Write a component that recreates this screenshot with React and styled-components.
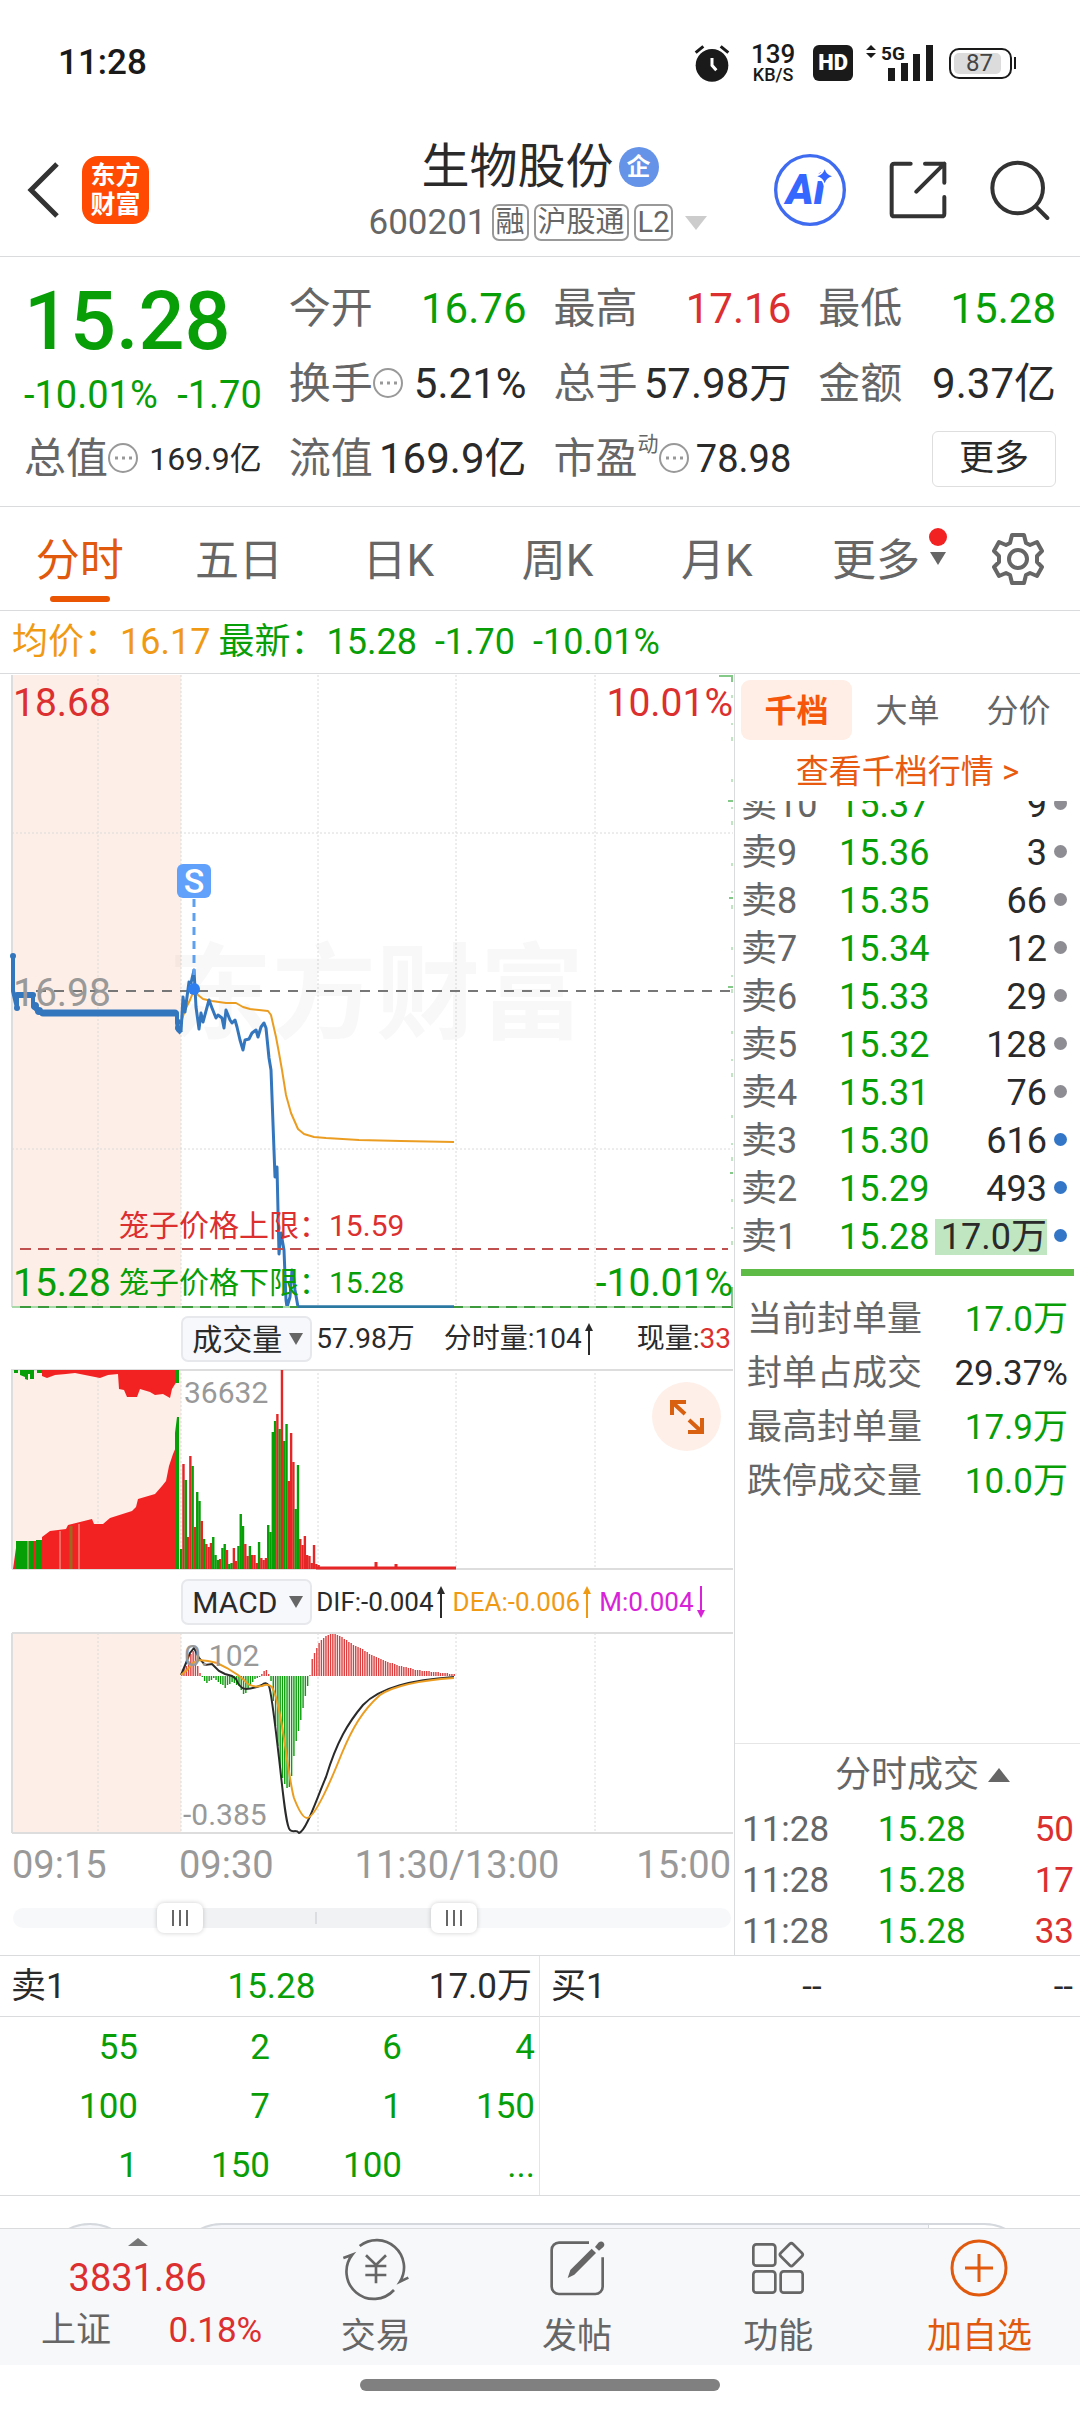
import { useState } from "react";
import styled, { createGlobalStyle } from "styled-components";

const GREEN = "#089e08";
const RED = "#dc2f2f";
const ORANGE = "#e0590d";
const LINE = "#d9dbdd";

const GlobalStyle = createGlobalStyle`
  * { box-sizing: border-box; }
  body {
    margin: 0;
    background: #fff;
    color: #2a2a2a;
    font-family: Roboto, "Noto Sans CJK SC", sans-serif;
  }
  button, input, select {
    font: inherit;
    color: inherit;
    background: none;
    border: 0;
    padding: 0;
    margin: 0;
  }
  a { text-decoration: none; }
  table { border-collapse: collapse; }
  th { font-weight: 400; text-align: left; }
  td, th { padding: 0; }
  svg { display: block; flex-shrink: 0; }
`;

const tones = { up: RED, down: GREEN, plain: "#2a2a2a", muted: "#666" };

/* ---------- status bar ---------- */

const StatusBar = styled.div`
  display: flex;
  align-items: center;
  justify-content: space-between;
  padding: 43px 64px 37px 58px;
`;

const Clock = styled.div`
  font-size: 35px;
  line-height: 40px;
  font-weight: 500;
  color: #1a1a1a;
`;

const StatusIcons = styled.div`
  display: flex;
  align-items: center;
  color: #1a1a1a;
`;

const NetSpeed = styled.div`
  display: flex;
  flex-direction: column;
  align-items: center;
  margin: 0 18px 0 21px;
  font-size: 26px;
  line-height: 23px;
  font-weight: 500;

  small {
    font-size: 18px;
    line-height: 17px;
  }
`;

const HdBadge = styled.div`
  padding: 0 5px;
  border-radius: 6px;
  background: #1a1a1a;
  color: #fff;
  font-size: 22px;
  line-height: 36px;
  font-weight: 900;
`;

const Signal = styled.svg`
  margin: 0 15px 0 13px;
`;

const Battery = styled.div`
  display: flex;
  align-items: center;

  div {
    width: 63px;
    padding: 3px;
    border: 2px solid #1a1a1a;
    border-radius: 10px;
  }
  span {
    display: block;
    width: 47px;
    border-radius: 5px;
    background: #dcdcdc;
    color: #444;
    font-size: 24px;
    line-height: 21px;
    padding-left: 12px;
  }
  &::after {
    content: "";
    width: 2px;
    height: 12px;
    margin-left: 2px;
    background: #1a1a1a;
  }
`;

/* ---------- header ---------- */

const Header = styled.header`
  display: grid;
  grid-template-columns: 1fr auto 1fr;
  align-items: center;
  padding: 18px 30px 15px 26px;
  border-bottom: 1px solid ${LINE};
`;

const HeaderLeft = styled.div`
  display: flex;
  align-items: center;
  gap: 22px;
`;

const HeaderRight = styled.div`
  display: flex;
  align-items: center;
  justify-content: flex-end;
  gap: 43px;
`;

const Logo = styled.div`
  width: 67px;
  padding: 5px 0;
  border-radius: 16px;
  background: #fe4a02;
  color: #fff;
  font-size: 25px;
  line-height: 29px;
  font-weight: 700;
  text-align: center;
`;

const TitleBlock = styled.div`
  display: flex;
  flex-direction: column;
  align-items: center;
  gap: 8px;
`;

const Title = styled.h1`
  display: flex;
  align-items: center;
  gap: 5px;
  margin: 0;
  padding-left: 4px;
  font-size: 48px;
  line-height: 58px;
  font-weight: 400;
`;

const CompanyBadge = styled.span`
  width: 40px;
  border-radius: 50%;
  background: #6593e8;
  color: #fff;
  font-size: 24px;
  line-height: 40px;
  font-weight: 700;
  text-align: center;
`;

const CodeRow = styled.div`
  display: flex;
  align-items: center;
  gap: 5px;
  color: #666;
  font-size: 35px;
  line-height: 36px;
`;

const Tag = styled.span`
  padding: 0 2px;
  border: 2px solid #999;
  border-radius: 7px;
  font-size: 29px;
  line-height: 33px;
`;

const Arrow = styled.span`
  width: 0;
  border: solid transparent;
  border-width: 0 ${(p) => p.$w}px;
  ${(p) => (p.$up ? "border-bottom" : "border-top")}: ${(p) => p.$h}px solid ${(p) => p.$color};
`;

const CodeArrow = styled(Arrow)`
  margin-left: 7px;
`;

/* ---------- quote panel ---------- */

const Quote = styled.section`
  display: grid;
  grid-template-columns: repeat(4, minmax(0, 1fr));
  grid-auto-rows: 75px;
  column-gap: 27px;
  align-items: center;
  padding: 14px 24px 10px 24px;
  border-bottom: 1px solid ${LINE};
`;

const PriceCell = styled.div`
  grid-row: span 2;
  align-self: stretch;
  display: flex;
  flex-direction: column;
  color: ${GREEN};
`;

const BigPrice = styled.div`
  font-size: 81px;
  line-height: 102px;
  font-weight: 500;
`;

const Change = styled.div`
  display: flex;
  justify-content: space-between;
  font-size: 38px;
  line-height: 44px;
`;

const Field = styled.div`
  display: flex;
  align-items: center;
  justify-content: space-between;
  white-space: nowrap;
  line-height: 50px;
`;

const FieldName = styled.span`
  display: flex;
  align-items: center;
  color: #666;
  font-size: 42px;

  sup {
    align-self: flex-start;
    font-size: 21px;
    line-height: 20px;
  }
`;

const FieldValue = styled.span`
  font-size: ${(p) => p.$size || 42}px;
  color: ${(p) => tones[p.$tone || "plain"]};
`;

const MoreButton = styled.button`
  justify-self: end;
  padding: 0 26px;
  border: 1px solid #dedede;
  border-radius: 6px;
  font-size: 35px;
  line-height: 54px;
`;

/* ---------- period tabs ---------- */

const Tabs = styled.nav`
  display: grid;
  grid-template-columns: repeat(6, 159fr) 124fr;
  align-items: start;
  border-bottom: 1px solid ${LINE};
`;

const Tab = styled.button`
  position: relative;
  padding: 23px 0 17px;
  font-size: 44px;
  line-height: 63px;
  color: ${(p) => (p.$active ? ORANGE : "#666")};

  &::after {
    content: "";
    position: absolute;
    left: calc(50% - 30px);
    bottom: 8px;
    width: 60px;
    height: 6px;
    border-radius: 3px;
    background: ${(p) => (p.$active ? "#ea5504" : "none")};
  }
`;

const TabMark = styled.span`
  position: absolute;
  right: 9px;
  top: 21px;
  display: flex;
  flex-direction: column;
  align-items: center;
  gap: 6px;

  i {
    width: 18px;
    height: 18px;
    border-radius: 50%;
    background: #f32222;
  }
`;

const GearButton = styled.button`
  display: flex;
  justify-content: center;
  align-self: center;
`;

const Legend = styled.div`
  display: flex;
  padding: 1px 12px 0;
  border-bottom: 1px solid ${LINE};
  color: ${GREEN};
  font-size: 36px;
  line-height: 61px;

  span { margin-right: 18px; }
  span:first-child {
    margin-right: 8px;
    color: #f09a14;
  }
`;

/* ---------- charts ---------- */

const Main = styled.main`
  display: grid;
  grid-template-columns: minmax(0, 734fr) minmax(0, 346fr);
  border-bottom: 1px solid ${LINE};
`;

const Plot = styled.svg`
  width: 100%;
  height: auto;
`;

const ChartBox = styled.div`
  position: relative;
`;

const ExpandButton = styled.button`
  position: absolute;
  top: 13px;
  right: 13px;
  width: 69px;
  height: 69px;
  border-radius: 50%;
  background: #feefe8;
`;

const IndicatorRow = styled.div`
  display: flex;
  align-items: center;
  padding: 8px 3px 7px 24.7%;
`;

const Picker = styled.label`
  position: relative;
  flex-shrink: 0;
  margin-right: 4px;

  select {
    appearance: none;
    width: 131px;
    height: 46px;
    padding-left: 9px;
    border: 2px solid #e6e8ec;
    border-radius: 7px;
    background: #f7f8fb;
    font-size: 30px;
  }
  span {
    position: absolute;
    right: 9px;
    top: 17px;
  }
`;

const Readings = styled.div`
  flex: 1;
  display: flex;
  gap: ${(p) => p.$gap}px;
  white-space: nowrap;
  font-size: ${(p) => p.$size}px;
  line-height: 46px;
`;

const Reading = styled.span`
  display: flex;
  align-items: center;
  gap: 3px;
  color: ${(p) => p.$color || "#2a2a2a"};

  em {
    font-style: normal;
    color: ${RED};
    margin-left: -3px;
  }
  &:nth-child(3) { margin-left: ${(p) => (p.$last ? "auto" : 0)}; }
`;

const TimeAxis = styled.div`
  display: grid;
  grid-template-columns: 167fr 148fr 260fr 144fr;
  padding: 0 3px 0 12px;
  color: #999;
  font-size: 38px;
  line-height: 63px;

  span:nth-child(3) { text-align: center; }
  span:nth-child(4) { text-align: right; }
`;

const RangeBar = styled.div`
  position: relative;
  height: 58px;
  padding: 11px 3px 0 13px;

  input {
    position: absolute;
    left: 13px;
    top: 6px;
    width: calc(100% - 16px);
    height: 30px;
    appearance: none;
    pointer-events: none;
  }
  input::-webkit-slider-thumb {
    appearance: none;
    pointer-events: auto;
    width: 46px;
    height: 30px;
    border-radius: 7px;
    box-shadow: 0 0 5px rgba(0, 0, 0, 0.2);
    background:
      linear-gradient(#666, #666) 15px 7px / 2px 16px no-repeat,
      linear-gradient(#666, #666) 22px 7px / 2px 16px no-repeat,
      linear-gradient(#666, #666) 29px 7px / 2px 16px no-repeat,
      #fff;
  }
`;

const Track = styled.div`
  display: flex;
  align-items: center;
  height: 20px;
  padding-left: 42%;
  border-radius: 10px;
  background: linear-gradient(90deg, #f7f8fa 22%, #f1f2f4 22% 61%, #f7f8fa 61%);

  &::after {
    content: "";
    width: 2px;
    height: 12px;
    background: #dcdde0;
  }
`;

/* ---------- order book ---------- */

const Side = styled.aside`
  display: flex;
  flex-direction: column;
  padding-top: 6px;
  border-left: 1px solid ${LINE};
`;

const SideTabs = styled.div`
  display: grid;
  grid-template-columns: repeat(3, 1fr);
  padding: 0 6px;
`;

const SideTab = styled.button`
  padding-top: 2px;
  border-radius: 9px;
  background: ${(p) => (p.$active ? "#feeee6" : "none")};
  color: ${(p) => (p.$active ? "#f5560a" : "#666")};
  font-size: 32px;
  line-height: 58px;
  font-weight: ${(p) => (p.$active ? 700 : 400)};
`;

const DepthLink = styled.a`
  padding-top: 2px;
  color: #e85a10;
  font-size: 33px;
  line-height: 59px;
  text-align: center;
`;

const Book = styled.div`
  display: flex;
  flex-direction: column;
  justify-content: flex-end;
  height: 460px;
  margin: 0 6px;
  overflow: hidden;

  table { width: 100%; }
  tr { height: 48px; }
  th {
    width: 98px;
    color: #666;
    white-space: nowrap;
  }
  td, th {
    font-size: 36px;
    line-height: 48px;
  }
  td:nth-child(2) { color: ${GREEN}; }
  td:nth-child(3) { text-align: right; }
  td:last-child { width: 27px; }
`;

const Volume = styled.span`
  display: inline-block;
  padding-left: 6px;
  line-height: 36px;
  background: ${(p) => (p.$hot ? "#bfe6c0" : "none")};
`;

const Dot = styled.i`
  display: block;
  width: 13px;
  height: 13px;
  margin: 0 auto 4px 7px;
  border-radius: 50%;
  background: ${(p) => (p.$big ? "#3376c8" : "#8e8d93")};
`;

const Divider = styled.div`
  height: 7px;
  margin: 8px 6px 0;
  background: #5dbb46;
`;

const Summary = styled.dl`
  margin: 0;
  padding: 17px 12px 0 12px;

  div {
    display: flex;
    justify-content: space-between;
    line-height: 54px;
    font-size: 35px;
  }
  dd { margin: 0; color: ${GREEN}; }
  dt { color: #666; }
  div:nth-child(2) dd { color: #2a2a2a; }
`;

const Trades = styled.div`
  margin-top: auto;
  border-top: 1px solid #e6e6e6;

  table { width: 100%; }
  td {
    padding-top: 4px;
    font-size: 35px;
    line-height: 47px;
  }
  td:nth-child(1) { padding-left: 7px; color: #666; }
  td:nth-child(2) { color: ${GREEN}; }
  td:nth-child(3) { padding-right: 6px; color: ${RED}; text-align: right; }
`;

const TradesTitle = styled.button`
  display: flex;
  align-items: center;
  justify-content: center;
  gap: 9px;
  width: 100%;
  padding: 4px 0 0 30px;
  color: #666;
  font-size: 36px;
  line-height: 54px;
`;

/* ---------- queue ---------- */

const Queue = styled.section`
  display: grid;
  grid-template-columns: 1fr 1fr;
  border-bottom: 1px solid ${LINE};
  font-size: 35px;
`;

const QueueSide = styled.div`
  border-right: 1px solid #e3e5e7;

  &:last-child { border-right: 0; }
`;

const QueueHead = styled.div`
  display: grid;
  grid-template-columns: repeat(3, 1fr);
  padding: 2px 7px 0 11px;
  border-bottom: 1px solid ${LINE};
  line-height: 58px;

  span:nth-child(2) {
    text-align: center;
    color: ${(p) => (p.$empty ? "inherit" : GREEN)};
  }
  span:nth-child(3) { text-align: right; }
`;

const QueueGrid = styled.div`
  display: grid;
  grid-template-columns: 138fr 132fr 132fr 133fr;
  padding: 1px 4px 0 0;
  color: ${GREEN};
  text-align: right;
  line-height: 59px;
`;

const CommentBar = styled.div`
  display: flex;
  gap: 36px;
  height: 32px;
  padding: 27px 48px 0 42px;
  overflow: hidden;

  button, div {
    flex: none;
    height: 96px;
    border: 2px solid #d5d9dd;
    border-radius: 48px;
    background: #f5f7fa;
  }
  button { width: 96px; }
  div {
    flex: 1;
    background: linear-gradient(90deg, #f5f7fa 88%, #d5d9dd 88% 88.2%, #fff 88.2%);
  }
`;

/* ---------- bottom nav ---------- */

const BottomNav = styled.nav`
  display: grid;
  grid-template-columns: 275fr repeat(4, 201fr);
  border-top: 1px solid ${LINE};
  background: #f7f8fa;
`;

const IndexBox = styled.button`
  display: flex;
  flex-direction: column;
  align-items: center;
  padding-top: 9px;
  color: ${RED};
  font-size: 38px;
  line-height: 64px;
`;

const IndexRow = styled.div`
  align-self: stretch;
  display: flex;
  justify-content: space-between;
  padding: 0 13px 0 41px;
  font-size: 35px;
  line-height: 41px;

  span:first-child { color: #666; }
`;

const NavItem = styled.button`
  display: flex;
  flex-direction: column;
  align-items: center;
  gap: 13px;
  padding: 9px 0 2px;
  color: ${(p) => (p.$accent ? ORANGE : "#666")};
  font-size: 35px;
  line-height: 52px;

  svg { overflow: visible; }
`;

const HomeArea = styled.div`
  padding: 14px 0 22px;

  &::after {
    content: "";
    display: block;
    width: 360px;
    height: 12px;
    margin: 0 auto;
    border-radius: 6px;
    background: #808080;
  }
`;

/* ---------- data ---------- */

const fields = [
  { name: "今开", value: "16.76", tone: "down" },
  { name: "最高", value: "17.16", tone: "up" },
  { name: "最低", value: "15.28", tone: "down" },
  { name: "换手", value: "5.21%", info: true },
  { name: "总手", value: "57.98万" },
  { name: "金额", value: "9.37亿" },
  { name: "总值", value: "169.9亿", info: true, size: 32 },
  { name: "流值", value: "169.9亿" },
  { name: "市盈", sup: "动", value: "78.98", info: true, size: 38 },
];

const periods = ["分时", "五日", "日K", "周K", "月K", "更多"];

const asks = [
  ["卖10", "15.37", "9"],
  ["卖9", "15.36", "3"],
  ["卖8", "15.35", "66"],
  ["卖7", "15.34", "12"],
  ["卖6", "15.33", "29"],
  ["卖5", "15.32", "128"],
  ["卖4", "15.31", "76"],
  ["卖3", "15.30", "616"],
  ["卖2", "15.29", "493"],
  ["卖1", "15.28", "17.0万"],
];

const summary = [
  ["当前封单量", "17.0万"],
  ["封单占成交", "29.37%"],
  ["最高封单量", "17.9万"],
  ["跌停成交量", "10.0万"],
];

const trades = [["11:28", "15.28", "50"], ["11:28", "15.28", "17"], ["11:28", "15.28", "33"]];

const queue = ["55", "2", "6", "4", "100", "7", "1", "150", "1", "150", "100", "..."];

const preOpen = "13,281 13,316 17,333 17,320 33,320 33,331 38,337 43,338 177,338 177,347 178,355 181,358";

const priceLine =
  "181,357 183,322 185,337 189,307 191,308 194,295 196,332 199,354 201,338 203,347 209,325 212,333 216,343 218,340 222,343 224,353 226,335 230,345 232,348 235,345 237,352 240,365 243,375 245,365 249,364 252,358 256,355 258,362 261,352 264,348 266,353 269,383 271,395 275,502 277,492 279,579 281,558 284,575 286,625 287,632 290,622 292,595 293,597 295,615 298,632 454,632";

const avgLine =
  "181,348 185,335 190,325 194,315 198,320 203,324 212,326 226,328 236,328 243,332 250,334 259,335 268,336 271,340 276,362 279,378 282,395 286,420 291,438 298,454 304,459 314,462 326,463 359,465 401,466 454,467";

const difLine =
  "M181 42L186 30 190 20 194 15 199 25 205 32 212 31 219 38 225 41 232 43 236 46Q240 56 246 56T262 52Q266 48 269 53C272 62 276 100 279 125C283 160 286 194 290 197C293 200 296 196 299 200C306 198 315 170 326 144C337 108 348 90 363 72C380 54 412 47 454 44";

const deaLine =
  "M181 42L187 37 193 30 199 27 208 28 217 30 227 35 238 42 245 48Q250 55 262 53 268 50 272 54C282 72 288 145 294 165C299 178 303 185 307 185C315 185 330 150 342 120C352 96 362 78 380 62C395 52 425 47 454 45";

// bar height per minute from 09:30, sign gives the colour
const volumes = [
  -20, 105, -89, 32, 113, -103, 42, -77, -68, 48, -30, 25, 22, 26, -32, -14, -9, 10, -21, -25, 19, -5, -6, 21, 8,
  -23, -55, -43, 25, 13, -23, 14, 14, 6, -27, 11, 9, 11, -44, -37, -137, -148, 155, -140, 199, -128, -145, 88,
  136, 107, -60, -104, 30, 24, 33, 14, 13, 6, 24, 5, 4,
];

const macdBars = [
  3, 7, 10, 15, 22, 25, 24, 10, 3, -1, -5, -7, -5, -4, -2, -4, -6, -8, -9, -12, -9, -8, -6, -7, -9, -10, -14, -18,
  -17, -13, -9, -6, -3, -2, -1, 2, 5, 6, 2, -5, -25, -50, -70, -92, -102, -108, -112, -111, -100, -80, -65, -55,
  -44, -32, -20, -10, 1, 17, 23, 28, 33, 36, 38, 40, 41, 42, 42, 42, 41, 40, 39, 37, 36, 34, 33, 31, 30, 29, 28,
  27, 25, 24, 22, 21, 20, 19, 18, 17, 16, 15, 14, 13, 13, 12, 11, 10, 10, 9, 9, 8, 8, 7, 6, 6, 6, 5, 5, 5, 5, 4,
  4, 4, 4, 3, 3, 3, 3, 2, 2, 2,
];

const minuteX = (i) => 181 + i * 2.29;

/* ---------- small drawings ---------- */

const InfoIcon = () => (
  <svg width="31" height="31" viewBox="0 0 31 31" fill="none" stroke="#999" strokeWidth="2">
    <circle cx="15" cy="15" r="14" />
    <path d="M7 15h3M14 15h3M21 15h3" strokeWidth="3" />
  </svg>
);

const TrendArrow = ({ down }) => (
  <svg width="8" height="32" viewBox="0 0 8 32" fill="currentColor">
    {down ? <path d="M3 0h2v24h3l-4 8-4-8h3z" /> : <path d="M3 32h2V8h3L4 0 0 8h3z" />}
  </svg>
);

function Grid({ height }) {
  return (
    <g>
      <rect x="12" y="0" width="169" height={height} fill="#fdeee7" />
      <g stroke="#dadada" strokeDasharray="2 2">
        {[98, 181, 318, 456, 595].map((x) => (
          <line key={x} x1={x} x2={x} y1="0" y2={height} />
        ))}
      </g>
      <path d={`M12 0V${height}`} stroke="#ddd" strokeWidth="2" />
    </g>
  );
}

function PriceChart() {
  return (
    <Plot viewBox="0 -1 734 634" fontSize="38">
      <Grid height={632} />
      <path d="M12 158H733M12 474H733" stroke="#dadada" strokeDasharray="2 2" />
      <text x="168" y="356" fontSize="104" fontWeight="700" fill="#777" fillOpacity="0.05">
        东方财富
      </text>
      <path d="M36 316H733" stroke="#777" strokeWidth="2" strokeDasharray="10 8" />
      <g fill="none" strokeLinejoin="round">
        <polyline points={avgLine} stroke="#eb9d22" strokeWidth="2" />
        <path d="M43 338H175" stroke="#3376bd" strokeWidth="7" strokeLinecap="round" />
        <path d="M17 320H33" stroke="#3376bd" strokeWidth="6" strokeLinecap="round" />
        <polyline points={preOpen} stroke="#3376bd" strokeWidth="4" />
        <polyline points={priceLine} stroke="#3376bd" strokeWidth="3" />
      </g>
      <g fill="#3376bd">
        <circle cx="13" cy="281" r="3" />
        <circle cx="17" cy="333" r="3" />
        <circle cx="35" cy="331" r="4" />
        <circle cx="39" cy="336" r="4" />
        <circle cx="178" cy="347" r="3" />
        <circle cx="178" cy="353" r="3" />
      </g>
      <path d="M194 224V300" stroke="#5f9ff0" strokeWidth="3" strokeDasharray="8 6" />
      <circle cx="194" cy="314" r="6" fill="#2e7ef0" />
      <rect x="177" y="189" width="34" height="34" rx="6" fill="#62a1fb" />
      <text x="194" y="218" fontSize="34" fontWeight="500" fill="#fff" textAnchor="middle">S</text>
      <path d="M20 574H728" stroke="#c05050" strokeWidth="2" strokeDasharray="11 7" />
      <path d="M12 632H733" stroke="#a8d8a8" strokeWidth="2" />
      <path d="M20 632H733" stroke="#3c9a3c" strokeWidth="2" strokeDasharray="11 7" />
      <path d="M298 632H454" stroke="#2b78a0" strokeWidth="3" />
      <g stroke="#84c987" strokeWidth="2" fill="none">
        <path d="M719 1H732V7M728 126H733M729 223H733M728 312H733M730 498H733M732 612V632" />
        <path d="M732 20V600" strokeWidth="1" strokeDasharray="3 25 2 12 4 38" />
      </g>
      <g fontSize="39">
        <text x="13" y="41" fill={RED}>18.68</text>
        <text x="733" y="41" fill={RED} textAnchor="end">10.01%</text>
        <text x="13" y="331" fill="#999">16.98</text>
        <text x="13" y="621" fill={GREEN}>15.28</text>
        <text x="733" y="621" fill={GREEN} textAnchor="end">-10.01%</text>
      </g>
      <g fontSize="30">
        <text x="119" y="561" fill={RED}>笼子价格上限：15.59</text>
        <text x="119" y="618" fill={GREEN}>笼子价格下限：15.28</text>
      </g>
    </Plot>
  );
}

function VolumeChart() {
  return (
    <Plot viewBox="0 0 734 202">
      <Grid height={200} />
      <path d="M12 1H733M12 200H733" stroke="#ddd" strokeWidth="2" />
      <g fill="#f32222">
        <path d="M42 1V7L47 9 55 6 66 5 75 4 85 6 95 8 100 9 108 6 118 5 119 20 124 21 127 28 137 28 140 20 150 23 155 26 163 25 170 29 172 20 177 12V1z" />
        <path d="M13 200L17 172H42V168L50 162 66 160 68 156 80 153 92 150 94 155H103L110 149 132 142 136 138 138 130 155 125 162 117 166 112 169 97 173 85 176 78V200z" />
      </g>
      <g fill="#069f06">
        <path d="M14 1V4H18V1zM20 1V6L25 8V10L28 11V5H30V10H34V1zM37 1V4H42V1zM176 1V14H179V1z" />
        <path d="M16 200V172H27V200zM28 200V172H33V200zM36 200V171H42V200zM175 200V64L177 48H179V200z" />
      </g>
      <path d="M71 200V157" stroke="#9a6a20" strokeWidth="3" />
      <path d="M28 200V172M60 200V162M79 200V155" stroke="#fdb0a0" />
      {volumes.map((v, i) => (
        <rect
          key={i}
          x={minuteX(i) - 1}
          y={200 - Math.abs(v)}
          width="2.4"
          height={Math.abs(v)}
          fill={v > 0 ? "#e62626" : "#069f06"}
        />
      ))}
      <path d="M316 199H456M376 199V193M396 199V195" stroke="#e62626" strokeWidth="3" />
      <text x="184" y="34" fontSize="30" fill="#999">36632</text>
    </Plot>
  );
}

function MacdChart() {
  return (
    <Plot viewBox="0 -1 734 202">
      <Grid height={200} />
      <path d="M12 0H733M12 200H733" stroke="#ddd" strokeWidth="2" />
      {macdBars.map((v, i) => (
        <rect
          key={i}
          x={minuteX(i)}
          y={v > 0 ? 43 - v : 43}
          width="1.4"
          height={Math.abs(v)}
          fill={v > 0 ? "#dc3f3f" : "#0c9c0c"}
        />
      ))}
      <g fill="none" strokeWidth="2">
        <path d={difLine} stroke="#2a2a2a" />
        <path d={deaLine} stroke="#eb9d22" />
      </g>
      <g fontSize="30" fill="#999">
        <text x="184" y="33">0.102</text>
        <text x="183" y="192">-0.385</text>
      </g>
    </Plot>
  );
}

export default function App() {
  const [period, setPeriod] = useState("分时");
  const [range, setRange] = useState([21.4, 62.2]);

  return (
    <>
      <GlobalStyle />
      <StatusBar>
        <Clock>11:28</Clock>
        <StatusIcons>
          <svg width="36" height="38" viewBox="0 0 108 114">
            <circle cx="54" cy="64" r="49" fill="#1a1a1a" />
            <path d="M5 26L28 7M103 26L80 7" stroke="#1a1a1a" strokeWidth="9" />
            <path d="M54 42V64L67 79" stroke="#fff" strokeWidth="9" fill="none" />
          </svg>
          <NetSpeed>
            139<small>KB/S</small>
          </NetSpeed>
          <HdBadge>HD</HdBadge>
          <Signal width="68" height="38" viewBox="0 0 68 38" fill="#1a1a1a">
            <path d="M0 6L5 1 10 6zM0 9L5 14 10 9z" />
            <text x="15" y="16" fontSize="19" fontWeight="700">5G</text>
            <path d="M22 24h7v13h-7zM35 19h7v18h-7zM47 10h7v27h-7zM60 1h7v36h-7z" />
          </Signal>
          <Battery>
            <div>
              <span>87</span>
            </div>
          </Battery>
        </StatusIcons>
      </StatusBar>

      <Header>
        <HeaderLeft>
          <button aria-label="返回">
            <svg width="34" height="58" viewBox="0 0 34 58" fill="none" stroke="#333" strokeWidth="5">
              <path d="M31 3L5 29 31 55" />
            </svg>
          </button>
          <Logo>
            东方
            <br />
            财富
          </Logo>
        </HeaderLeft>
        <TitleBlock>
          <Title>
            生物股份<CompanyBadge>企</CompanyBadge>
          </Title>
          <CodeRow>
            600201 <Tag>融</Tag>
            <Tag>沪股通</Tag>
            <Tag>L2</Tag>
            <CodeArrow $w={11} $h={14} $color="#ccc" />
          </CodeRow>
        </TitleBlock>
        <HeaderRight>
          <button aria-label="Ai">
            <svg width="72" height="72" viewBox="0 0 216 216">
              <circle cx="108" cy="108" r="103" fill="none" stroke="#3f6bf0" strokeWidth="10" />
              <text x="36" y="149" fontSize="126" fontWeight="900" fontStyle="italic" fill="#3567fe">Ai</text>
              <path
                d="M152 46Q157 62 174 67Q157 72 152 88Q147 72 130 67Q147 62 152 46z"
                fill="#3567fe"
                stroke="#fff"
                strokeWidth="10"
                paintOrder="stroke"
              />
            </svg>
          </button>
          <button aria-label="分享">
            <svg width="58" height="58" viewBox="0 0 174 174" fill="none" stroke="#333" strokeWidth="12" strokeLinecap="round" strokeLinejoin="round">
              <path d="M65 8H16Q8 8 8 16V158Q8 166 16 166H158Q166 166 166 158V108M108 8H166V65M166 8L82 92" />
            </svg>
          </button>
          <button aria-label="搜索">
            <svg width="60" height="60" viewBox="0 0 180 180" fill="none" stroke="#333" strokeWidth="12" strokeLinecap="round">
              <circle cx="83" cy="84" r="76" />
              <path d="M138 140L172 174" />
            </svg>
          </button>
        </HeaderRight>
      </Header>

      <Quote>
        <PriceCell>
          <BigPrice>15.28</BigPrice>
          <Change>
            <span>-10.01%</span>
            <span>-1.70</span>
          </Change>
        </PriceCell>
        {fields.map((f) => (
          <Field key={f.name}>
            <FieldName>
              {f.name}
              {f.sup && <sup>{f.sup}</sup>}
              {f.info && <InfoIcon />}
            </FieldName>
            <FieldValue $tone={f.tone} $size={f.size}>
              {f.value}
            </FieldValue>
          </Field>
        ))}
        <MoreButton>更多</MoreButton>
      </Quote>

      <Tabs>
        {periods.map((p) => (
          <Tab key={p} $active={p === period} onClick={() => setPeriod(p)}>
            {p}
            {p === "更多" && (
              <TabMark>
                <i />
                <Arrow $w={8} $h={13} $color="#666" />
              </TabMark>
            )}
          </Tab>
        ))}
        <GearButton aria-label="设置">
          <svg width="54" height="54" viewBox="-27 -27 54 54" fill="none" stroke="#666" strokeWidth="4" strokeLinejoin="round">
            <path d="M-6-24H6L8-16 12-14 19-17 24-8 19-3V3L24 8 19 17 12 14 8 16 6 24H-6L-8 16-12 14-19 17-24 8-19 3V-3L-24-8-19-17-12-14-8-16z" />
            <circle r="9" />
          </svg>
        </GearButton>
      </Tabs>

      <Legend>
        <span>均价：16.17</span>
        <span>最新：15.28</span>
        <span>-1.70</span>
        <span>-10.01%</span>
      </Legend>

      <Main>
        <div>
          <PriceChart />
          <IndicatorRow>
            <Picker>
              <select aria-label="成交量">
                <option>成交量</option>
              </select>
              <Arrow $w={7} $h={12} $color="#666" />
            </Picker>
            <Readings $size={28} $gap={29}>
              <Reading>57.98万</Reading>
              <Reading>
                分时量:104 <TrendArrow />
              </Reading>
              <Reading $last>
                现量:<em>33</em>
              </Reading>
            </Readings>
          </IndicatorRow>
          <ChartBox>
            <VolumeChart />
            <ExpandButton aria-label="展开">
              <svg width="69" height="69" viewBox="0 0 69 69" fill="none" stroke="#d9600f" strokeWidth="4">
                <path d="M34 20H20V33M20 20L33 32M37 38L50 50M50 36V50H36" />
              </svg>
            </ExpandButton>
          </ChartBox>
          <IndicatorRow>
            <Picker>
              <select aria-label="MACD">
                <option>MACD</option>
              </select>
              <Arrow $w={7} $h={12} $color="#666" />
            </Picker>
            <Readings $size={26} $gap={8}>
              <Reading>
                DIF:-0.004 <TrendArrow />
              </Reading>
              <Reading $color="#f09a14">
                DEA:-0.006 <TrendArrow />
              </Reading>
              <Reading $color="#d822d8">
                M:0.004 <TrendArrow down />
              </Reading>
            </Readings>
          </IndicatorRow>
          <MacdChart />
          <TimeAxis>
            <span>09:15</span>
            <span>09:30</span>
            <span>11:30/13:00</span>
            <span>15:00</span>
          </TimeAxis>
          <RangeBar>
            <Track />
            <input
              type="range"
              aria-label="起始时间"
              step="0.1"
              value={range[0]}
              onChange={(e) => setRange([Number(e.target.value), range[1]])}
            />
            <input
              type="range"
              aria-label="结束时间"
              step="0.1"
              value={range[1]}
              onChange={(e) => setRange([range[0], Number(e.target.value)])}
            />
          </RangeBar>
        </div>

        <Side>
          <SideTabs>
            <SideTab $active>千档</SideTab>
            <SideTab>大单</SideTab>
            <SideTab>分价</SideTab>
          </SideTabs>
          <DepthLink href="#depth">查看千档行情 &gt;</DepthLink>
          <Book>
            <table>
              <tbody>
                {asks.map(([name, price, vol], i) => (
                  <tr key={name}>
                    <th scope="row">{name}</th>
                    <td>{price}</td>
                    <td>
                      <Volume $hot={i === 9}>{vol}</Volume>
                    </td>
                    <td>
                      <Dot $big={i > 6} />
                    </td>
                  </tr>
                ))}
              </tbody>
            </table>
          </Book>
          <Divider />
          <Summary>
            {summary.map(([k, v]) => (
              <div key={k}>
                <dt>{k}</dt>
                <dd>{v}</dd>
              </div>
            ))}
          </Summary>
          <Trades>
            <TradesTitle>
              分时成交
              <Arrow $up $w={11} $h={14} $color="#666" />
            </TradesTitle>
            <table>
              <tbody>
                {trades.map((t, i) => (
                  <tr key={i}>
                    {t.map((v) => (
                      <td key={v}>{v}</td>
                    ))}
                  </tr>
                ))}
              </tbody>
            </table>
          </Trades>
        </Side>
      </Main>

      <Queue>
        <QueueSide>
          <QueueHead>
            <span>卖1</span>
            <span>15.28</span>
            <span>17.0万</span>
          </QueueHead>
          <QueueGrid>
            {queue.map((q, i) => (
              <span key={i}>{q}</span>
            ))}
          </QueueGrid>
        </QueueSide>
        <QueueSide>
          <QueueHead $empty>
            <span>买1</span>
            <span>--</span>
            <span>--</span>
          </QueueHead>
        </QueueSide>
      </Queue>

      <CommentBar>
        <button aria-label="头像" />
        <div />
      </CommentBar>

      <BottomNav>
        <IndexBox>
          <Arrow $up $w={10} $h={8} $color="#777" />
          3831.86
          <IndexRow>
            <span>上证</span>
            <span>0.18%</span>
          </IndexRow>
        </IndexBox>
        <NavItem>
          <svg width="60" height="60" viewBox="0 0 180 180" fill="none" stroke="#666" strokeWidth="8">
            <path d="M41 24A82 82 0 0 1 162 131L187 119M144 156A82 82 0 0 1 19 50L-8 60" />
            <path d="M60 52L90 81 120 52M58 84H121M58 111H121M90 81V136" />
          </svg>
          交易
        </NavItem>
        <NavItem>
          <svg width="60" height="60" viewBox="0 0 180 180" fill="none" stroke="#666" strokeWidth="8">
            <path d="M126 14H36A22 22 0 0 0 14 36V146A22 22 0 0 0 36 168H145A22 22 0 0 0 167 146V58" />
            <path d="M62 120L70 96 134 32 147 45 82 110z" fill="#666" stroke="none" />
            <path d="M144 27L154 14Q163 7 170 14 175 21 168 28L156 38z" fill="#666" stroke="none" />
          </svg>
          发帖
        </NavItem>
        <NavItem>
          <svg width="60" height="60" viewBox="0 0 180 180" fill="none" stroke="#666" strokeWidth="8">
            <rect x="16" y="19" width="66" height="64" rx="9" />
            <rect x="16" y="100" width="66" height="64" rx="9" />
            <rect x="98" y="100" width="66" height="64" rx="9" />
            <rect x="104" y="24" width="52" height="52" rx="7" transform="rotate(45 130 50)" />
          </svg>
          功能
        </NavItem>
        <NavItem $accent>
          <svg width="60" height="60" viewBox="0 0 60 60" fill="none" stroke="#e0590d" strokeWidth="3">
            <circle cx="30" cy="30" r="27" />
            <path d="M16 30H44M30 16V44" />
          </svg>
          加自选
        </NavItem>
      </BottomNav>
      <HomeArea />
    </>
  );
}
